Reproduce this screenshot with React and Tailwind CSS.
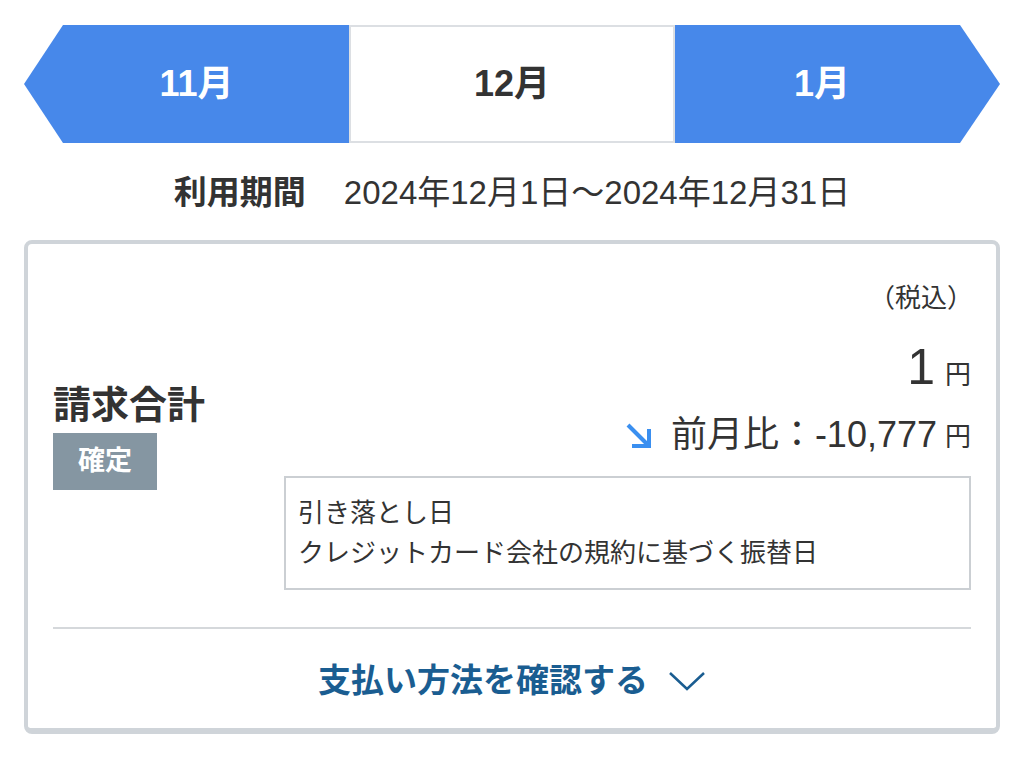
import React from "react";

const FONT = { fontFamily: '"Liberation Sans", "Noto Sans CJK JP", sans-serif' };

export default function App() {
  return (
    <div className="w-[1024px] h-[762px] bg-white px-6 pt-[25px] text-[#333]" style={FONT}>
      {/* Month nav */}
      <div className="flex h-[118px]">
        <div className="w-[325px] h-full bg-[#4788ea] text-white font-bold text-[36px] flex items-center justify-center pl-[20px] [clip-path:polygon(39px_0,100%_0,100%_100%,39px_100%,0_50%)]">
          11月
        </div>
        <div className="w-[326px] h-full bg-white border-2 border-[#dcdfe3] font-bold text-[36px] flex items-center justify-center text-[#333]">
          12月
        </div>
        <div className="w-[325px] h-full bg-[#4788ea] text-white font-bold text-[36px] flex items-center justify-center pr-[31px] [clip-path:polygon(0_0,calc(100%-40px)_0,100%_50%,calc(100%-40px)_100%,0_100%)]">
          1月
        </div>
      </div>

      {/* Period */}
      <div className="mt-[28px] flex justify-center gap-[38px] text-[33px] leading-[44px]">
        <span className="font-bold">利用期間</span>
        <span>2024年12月1日〜2024年12月31日</span>
      </div>

      {/* Card */}
      <div className="mt-[25px] border-4 border-b-[6px] border-[#cfd4d9] rounded-[8px] px-[25px]">
        <div className="flex items-center pt-[37px]">
          <div className="w-[231px] shrink-0 flex flex-col items-start">
            <div className="font-bold text-[38px] leading-[46px]">請求合計</div>
            <div className="mt-[5px] w-[104px] h-[57px] bg-[#8596a2] text-white font-bold text-[27px] flex items-center justify-center">
              確定
            </div>
          </div>
          <div className="flex-1 flex flex-col items-end">
            <div className="text-[26px] leading-[34px] text-[#333] -mr-[2px]">（税込）</div>
            <div className="mt-[24px] flex items-baseline gap-[10px]">
              <span className="text-[50px] leading-[56px]">1</span>
              <span className="text-[26px]">円</span>
            </div>
            <div className="mt-[18px] flex items-center">
              <svg width="26" height="26" viewBox="0 0 26 26" className="mr-[20px]">
                <path d="M3 3 L22 22" stroke="#3a8ff0" strokeWidth="4" fill="none" />
                <path d="M24 7 V24 H7" stroke="#3a8ff0" strokeWidth="4" fill="none" />
              </svg>
              <span className="text-[36px] leading-[44px]">前月比：-10,777</span>
              <span className="text-[26px] ml-[8px] mt-[4px]">円</span>
            </div>
            <div className="mt-[19px] w-full border-2 border-[#cbcfd3] px-[12px] py-[15px] text-[26px] leading-[40px]">
              <div>引き落とし日</div>
              <div>クレジットカード会社の規約に基づく振替日</div>
            </div>
          </div>
        </div>
        <div className="mt-[37px] h-[2px] bg-[#d5d8db]" />
        <div className="pt-[30px] pb-[25px] flex items-center justify-center gap-[20px] text-[#1a5d91]">
          <span className="font-bold text-[33px] leading-[44px]">支払い方法を確認する</span>
          <svg width="38" height="22" viewBox="0 0 38 22">
            <path d="M2 3 L19 19 L36 3" stroke="#1a5d91" strokeWidth="2.5" fill="none" />
          </svg>
        </div>
      </div>
    </div>
  );
}
